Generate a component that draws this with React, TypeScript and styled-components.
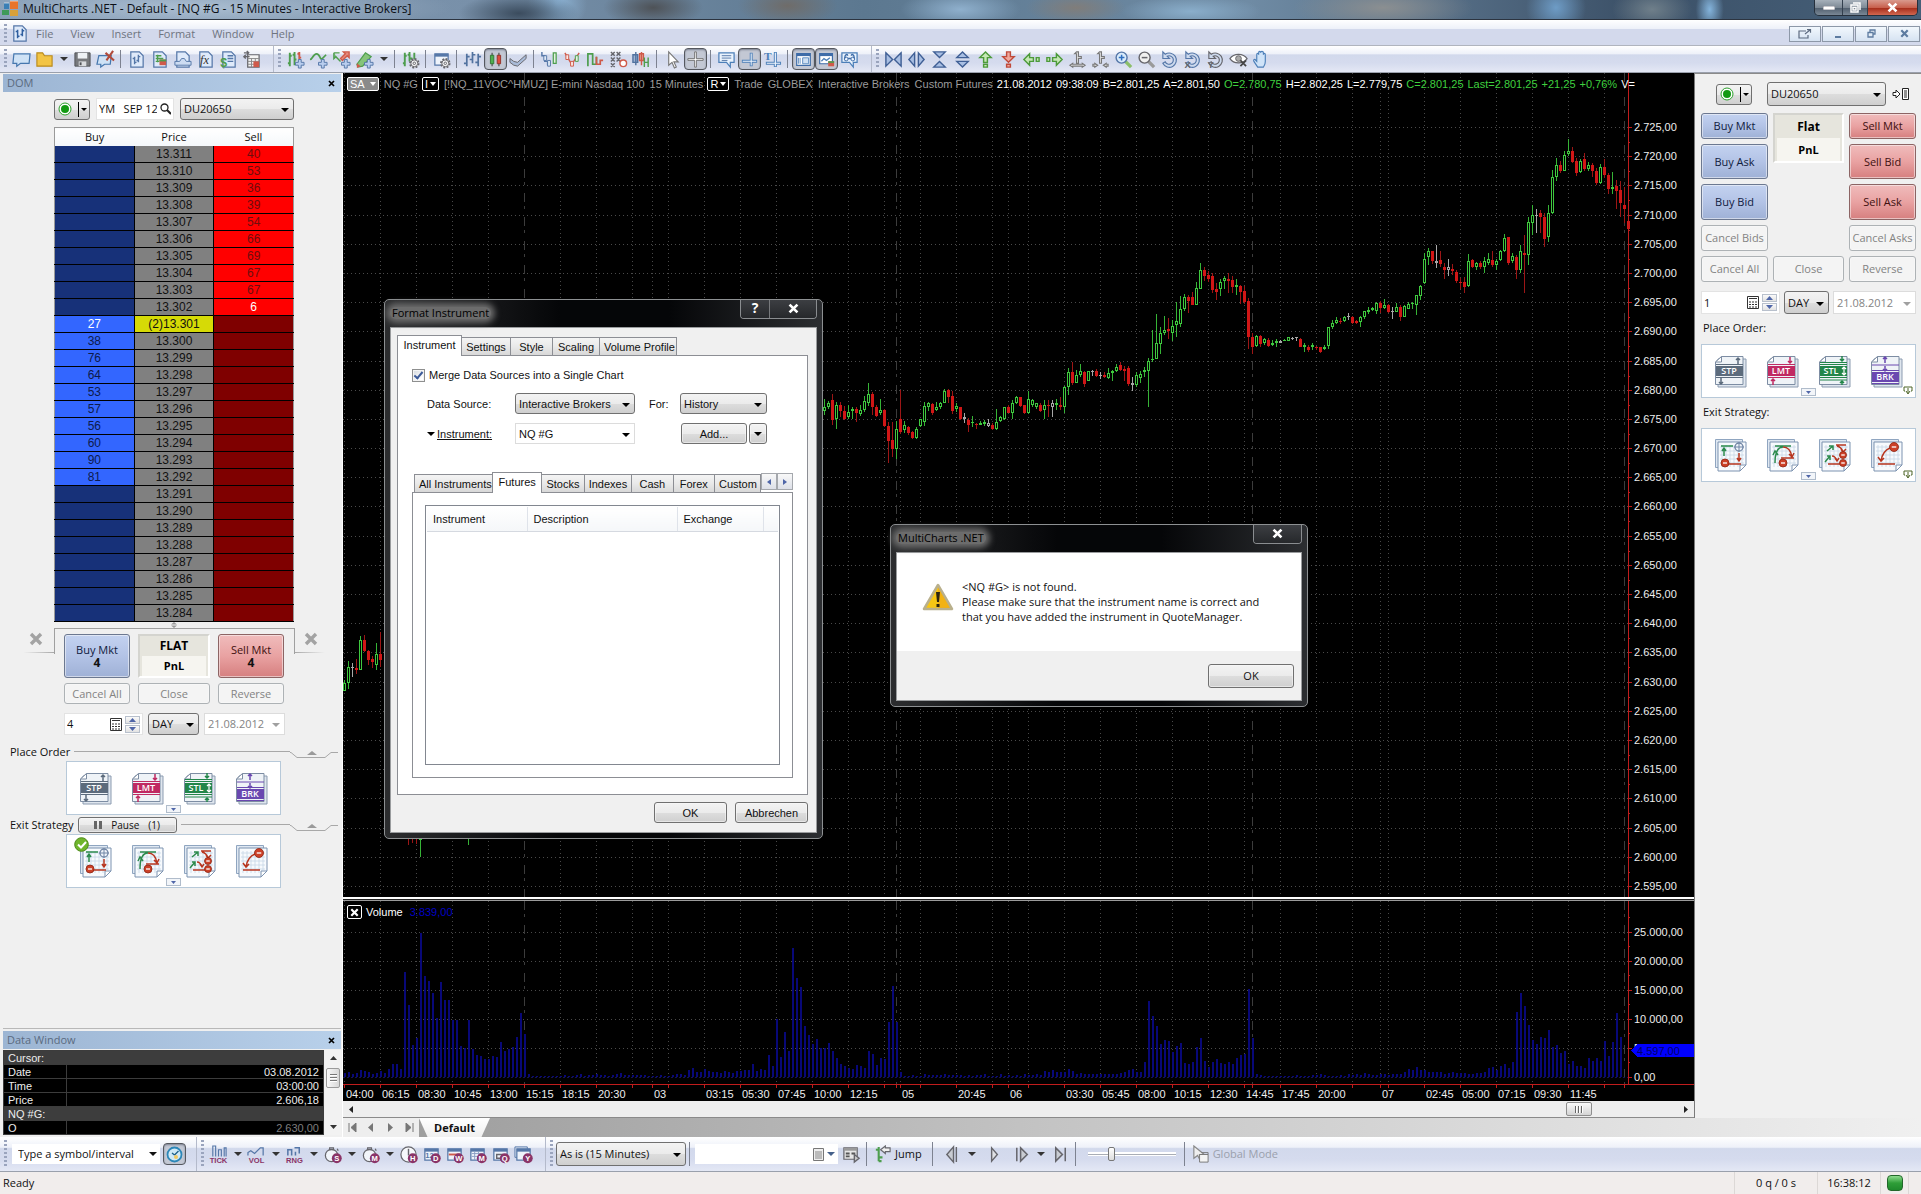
import React from "react";
import styled, { createGlobalStyle, css } from "styled-components";

const UI = `"Open Sans", "Noto Sans", sans-serif`;
const ARIAL = `"Liberation Sans", Arial, sans-serif`;

const Global = createGlobalStyle`
  *, *::before, *::after { box-sizing: border-box; }
  html, body { margin: 0; height: 100%; overflow: hidden; }
  body { font: 11px/14px ${UI}; color: #111; background: #f0f0f0; }
  button, input, select { font: inherit; color: inherit; margin: 0; }
  h1, h2, p { margin: 0; font-weight: 400; font-size: inherit; }
  table { border-collapse: collapse; }
  svg { display: block; }
`;

/* ---------- chart data ---------- */

type Candle = [string, number, number, number, number];
type Run = { x: number; bars: string };

/* each bar: colour, high, body top, body bottom, low, in thirds of a pixel */
const PRICE_RUNS: Run[] = [
  {
    x: 344,
    bars: `g1679,1688,1714,1714 g1623,1640,1688,1706 w1629,1642,1645,1670 r1618,1643,1649,1661 g1549,1559,1649,1649
    r1546,1559,1593,1596 r1590,1593,1621,1634 r1607,1618,1627,1643 g1568,1603,1634,1649 r1537,1603,1621,1640`,
  },
  { x: 408, bars: `r2140,2145,2150,2176 r2140,2145,2150,2170 r2130,2140,2150,2172 g2120,2130,2160,2212` },
  { x: 468, bars: `g2130,2140,2155,2174` },
  {
    x: 824,
    bars: `g838,860,872,886 g842,848,860,868 r822,840,900,916 g846,855,898,926 r846,856,872,890 r858,872,898,900
    g855,876,890,898 g862,868,874,898 r862,868,880,905 g855,870,882,888 g828,842,870,876 g790,822,850,858
    r815,822,860,886 r855,860,888,890 g838,870,880,886 r866,870,918,922 r905,918,962,1028 r905,960,986,1012
    g903,928,986,1018 r810,897,936,942 g903,916,930,938 r918,922,940,944 r932,936,954,956 g922,926,953,956
    g898,898,918,920 g846,858,905,918 g846,850,860,872 r848,852,880,886 g846,860,870,874 g846,850,860,866
    g806,814,848,850 r808,810,832,850 r814,828,872,882 g850,858,868,876 r860,862,898,900 w880,892,898,910
    r895,900,915,935 g888,905,908,920 r908,912,914,926 g902,908,914,916 g900,906,912,918 w898,910,918,922
    r910,916,928,930 g868,906,928,930 g888,890,904,906 g860,862,898,900 r854,860,878,880 g840,850,878,896
    g828,830,850,852 r830,832,858,860 r854,856,880,882 g812,838,880,882 g838,840,856,862 g848,850,862,866
    r850,854,872,876 g840,856,870,898 r840,855,857,890 w840,850,860,890 g838,850,855,870 r832,855,860,870
    g798,800,860,878 g745,757,800,825 r726,757,788,794 g750,765,788,790 g732,752,765,772 r754,756,793,802
    g752,754,782,784 w750,752,755,768 r746,754,768,770 w755,765,767,778 r756,764,772,774 g745,758,773,776
    g750,752,760,782 g732,740,754,756 r726,736,750,752 r738,748,752,782 r738,745,793,798 w770,790,795,812
    g757,766,795,802 g752,762,775,790 g742,750,756,772 g715,722,754,860 g630,716,719,726 g582,670,716,718
    g622,640,672,702 g588,630,640,645 r594,628,632,658 g600,618,638,662 g546,604,614,652 g528,566,612,622
    g522,530,566,572 r526,532,544,580 r516,532,554,556 g486,504,554,556 g430,450,506,508 r442,450,468,482
    r452,465,477,486 r460,467,510,518 r490,508,516,540 g478,486,508,528 g468,474,482,506 r460,476,482,520
    r468,480,500,520 g478,494,502,525 r495,497,516,552 r498,514,546,552 r535,544,650,688 r640,650,680,703
    g645,648,678,680 r645,648,672,680 g655,658,668,676 r655,660,678,680 g660,668,676,678 g656,662,668,682
    w660,662,668,670 g658,660,662,664 g650,652,662,664 w650,653,658,660 w650,652,655,664 r655,657,680,682
    g670,676,680,696 r675,680,690,696 g670,676,680,690 r678,680,682,690 r680,682,696,700 g675,680,688,690
    g620,622,678,686 g600,608,622,626 g592,600,610,612 r594,602,605,612 g588,590,604,606 w580,588,590,600
    r588,590,608,612 r600,602,610,612 g588,592,606,620 g572,574,590,596 g562,570,576,582 g562,564,570,574
    g546,548,572,582 r542,548,565,580 g538,555,563,568 r552,554,576,580 w562,572,575,597 g548,562,575,576
    r556,562,592,602 g555,557,590,592 g546,552,566,568 g546,548,553,568 g524,526,554,584 g495,497,527,540
    g398,418,490,492 g384,394,412,434 r392,394,422,432 w376,422,430,444 r394,420,433,442 r430,440,450,476
    w416,442,450,468 r432,448,453,466 r450,456,482,488 r474,486,490,506 r472,486,500,518 g402,422,498,500
    r418,420,440,444 g426,430,440,450 r422,430,442,448 g410,422,442,458 g400,418,428,434 r394,420,434,442
    g418,422,434,450 g390,394,420,422 g342,354,394,396 r350,352,428,434 g400,408,424,430 r405,410,450,476
    g376,394,450,458 r346,400,404,518 g290,306,404,434 g254,286,308,345 w268,285,288,338 r270,280,290,338
    r278,290,356,382 g256,280,352,366 g150,172,280,282 g114,136,172,184 r122,136,152,158 g94,104,152,154
    g58,94,102,108 r80,94,126,128 r114,124,158,168 g118,124,156,158 r98,118,148,154 g126,136,146,154
    r128,136,154,172 r145,154,190,194 g133,142,190,192 r118,142,166,174 r158,166,208,222 g156,200,208,222
    r180,198,214,266 r184,210,250,290 r200,256,266,310 r290,304,326,328`,
  },
];

const parseRun = ({ x, bars }: Run) =>
  bars
    .trim()
    .split(/\s+/)
    .map((b, i) => {
      const [h, t, m, l] = b.slice(1).split(",").map(Number);
      return { x: x + i * 4, bar: [b[0], h, t, m, l] as Candle };
    });

const CANDLES = PRICE_RUNS.flatMap(parseRun);
const INK: Record<string, string> = { g: "#3fc83f", r: "#d01616", w: "#a8a8a8" };
const WICK: Record<string, string> = { g: "#36b436", r: "#9c1616", w: "#a8a8a8" };

/* bar heights in thirds of a pixel, one bar every four pixels */
const VOLUME_X = 344;
const VOLUME = [
  12, 14, 8, 12, 20, 17, 14, 8, 12, 17, 12, 23, 38, 38, 23, 315, 216, 95, 116, 432, 302, 287, 251, 176, 285, 230, 230,
  172, 172, 92, 87, 170, 83, 65, 62, 54, 54, 62, 60, 106, 78, 84, 90, 120, 192, 130, 8, 4, 2, 3, 2, 3, 2, 2, 3, 5, 3, 4,
  5, 9, 4, 5, 6, 8, 7, 5, 4, 6, 10, 11, 6, 6, 5, 7, 5, 6, 4, 2, 2, 5, 2, 3, 6, 9, 9, 6, 20, 26, 14, 14, 24, 17, 14, 14,
  12, 17, 14, 12, 17, 17, 20, 20, 38, 17, 23, 20, 65, 32, 174, 60, 134, 78, 387, 297, 270, 154, 126, 100, 114, 88, 88,
  102, 78, 58, 40, 32, 28, 24, 35, 32, 26, 78, 68, 35, 58, 54, 164, 273, 164, 14, 4, 3, 5, 3, 2, 9, 7, 6, 5, 7, 9, 6, 5,
  6, 6, 4, 5, 4, 6, 5, 8, 4, 3, 3, 9, 3, 7, 4, 5, 4, 9, 6, 5, 8, 7, 17, 15, 20, 14, 14, 14, 23, 18, 10, 12, 10, 9, 10, 8,
  9, 8, 10, 9, 10, 12, 14, 20, 23, 14, 14, 44, 228, 183, 154, 98, 112, 108, 74, 92, 102, 42, 40, 44, 90, 116, 47, 30, 45,
  53, 42, 38, 45, 40, 56, 65, 68, 265, 116, 8, 5, 3, 4, 4, 3, 3, 3, 4, 3, 5, 3, 4, 3, 5, 6, 8, 5, 4, 3, 3, 5, 4, 9, 6, 8,
  7, 12, 8, 6, 7, 8, 10, 7, 8, 9, 10, 14, 23, 22, 29, 20, 20, 14, 14, 14, 14, 10, 12, 14, 12, 12, 11, 10, 10, 12, 12, 14, 26,
  29, 20, 32, 38, 26, 44, 195, 252, 212, 157, 110, 98, 120, 118, 140, 90, 95, 72, 78, 40, 47, 32, 32, 28, 56, 48, 56, 47,
  108, 62, 104, 192, 120,
];

const GRID_X = [344, 380, 416, 452, 488, 560, 596, 632, 652, 668, 704, 740, 776, 812, 848, 884, 900, 920, 956, 992, 1008,
  1028, 1064, 1100, 1136, 1172, 1208, 1244, 1280, 1316, 1352, 1380, 1388, 1424, 1460, 1496, 1532, 1568, 1604];
const SESSION_X = [524, 896, 1252, 1624];

const TIMES: [number, string][] = [
  [344, "04:00"], [380, "06:15"], [416, "08:30"], [452, "10:45"], [488, "13:00"], [524, "15:15"], [560, "18:15"],
  [596, "20:30"], [652, "03"], [704, "03:15"], [740, "05:30"], [776, "07:45"], [812, "10:00"], [848, "12:15"], [900, "05"],
  [956, "20:45"], [1008, "06"], [1064, "03:30"], [1100, "05:45"], [1136, "08:00"], [1172, "10:15"], [1208, "12:30"],
  [1244, "14:45"], [1280, "17:45"], [1316, "20:00"], [1380, "07"], [1424, "02:45"], [1460, "05:00"], [1496, "07:15"],
  [1532, "09:30"], [1568, "11:45"],
];

const AXIS_X = 1628;
const PRICES = Array.from({ length: 27 }, (_, i) => ({
  y: Math.round(127 + i * 29.19),
  label: `2.${725 - i * 5},00`,
}));
const VOLS = ["25.000,00", "20.000,00", "15.000,00", "10.000,00", "5.000,00", "0,00"].map((label, i) => ({
  y: Math.round(932 + i * 28.9),
  label,
}));

/* ---------- shared controls ---------- */

const glass = "linear-gradient(#f3f3f3, #ebebeb 50%, #dddddd 51%, #cfcfcf)";

const Button = styled.button<{ $tone?: "buy" | "sell"; $w?: number; $h?: number; $font?: string }>`
  display: flex;
  flex-direction: column;
  align-items: center;
  justify-content: center;
  width: ${(p) => (p.$w ? `${p.$w}px` : "100%")};
  height: ${(p) => p.$h ?? 21}px;
  padding: 0;
  border: 1px solid #707070;
  border-radius: 3px;
  background: ${glass};
  box-shadow: inset 0 0 0 1px #fafafa88;
  white-space: nowrap;
  ${(p) => p.$font && `font-family: ${p.$font};`}
  ${(p) => p.$tone === "buy" && css`background: linear-gradient(#c3d2f0, #b3c3e6 50%, #9fb1d6); border-color: #6c7890; color: #102040;`}
  ${(p) => p.$tone === "sell" && css`background: linear-gradient(#f0bcbc, #e9a2a2 50%, #d67f7f); border-color: #8c6464; color: #401010;`}
  &:disabled { background: #f4f4f4; border-color: #adb2b5; color: #838383; }
  b { font-size: 12px; line-height: 12px; color: #111; }
`;

const SelectBox = styled.span<{ $w?: number; $h?: number; $plain?: boolean; $font?: string }>`
  position: relative;
  display: block;
  flex: ${(p) => (p.$w ? "none" : 1)};
  ${(p) => p.$w && `width: ${p.$w}px;`}
  select, input {
    display: block;
    width: 100%;
    height: ${(p) => p.$h ?? 22}px;
    padding: 0 16px 0 3px;
    appearance: none;
    outline: 0;
    font-family: ${(p) => p.$font ?? UI};
    border: 1px solid ${(p) => (p.$plain ? "#dcdcdc" : "#707070")};
    border-radius: ${(p) => (p.$plain ? 0 : 3)}px;
    background: ${(p) => (p.$plain ? "#fff" : glass)};
  }
  select:disabled, input:disabled { color: #838383; opacity: 1; }
  &::after {
    content: "";
    position: absolute;
    right: 5px;
    top: calc(50% - 1px);
    border: 4px solid transparent;
    border-top: 4px solid #000;
    border-bottom: 0;
    pointer-events: none;
  }
  &:has(:disabled)::after { border-top-color: #a0a0a0; }
`;

const Select = ({ value, label, ...rest }: { value: string; label: string; disabled?: boolean; $w?: number; $h?: number; $plain?: boolean; $font?: string }) => {
  const { disabled, ...box } = rest;
  return (
    <SelectBox {...box}>
      <select aria-label={label} disabled={disabled} defaultValue={value}>
        <option>{value}</option>
      </select>
    </SelectBox>
  );
};

const Caret = styled.span<{ $c?: string }>`
  display: inline-block;
  flex: none;
  border: 4px solid transparent;
  border-top: 4px solid ${(p) => p.$c ?? "#111"};
  border-bottom: 0;
`;

/* ---------- toolbar icons (20 x 20) ---------- */

const B = "#5577a8";
const G = "#4e9e4e";
const R = "#cf5a4a";
const K = "#66666c";
const P = "#8a3468";

const S = (d: string, c = B, f = "none", w = 1.5) => <path d={d} stroke={c} fill={f} strokeWidth={w} />;
const Plus = () => <path d="M13 10h3v3h3v3h-3v3h-3v-3h-3v-3h3z" fill="#b9cdee" stroke={B} />;
const Gear = () => (
  <>
    <circle cx="14" cy="14" r="4.500" fill="#eee" stroke={K} strokeWidth="2" strokeDasharray="2 1.500" />
    <circle cx="14" cy="14" r="3.600" fill="#f4f4f4" stroke={K} />
    <circle cx="14" cy="14" r="1.300" fill="none" stroke={K} />
  </>
);
const Page = ({ c = "#dfeafa" }: { c?: string }) => <path d="M4 2h9l4 4v12H4z" fill={c} stroke={B} strokeWidth="1.300" />;
const Bubble = () => <path d="M2 3h16v10h-4v5l-4-5H2z" fill="#eaf3fd" stroke="#4c7fb8" strokeWidth="1.300" />;
const Win = () => (
  <>
    <path d="M3 4h14v12H3z" fill="#eef3fb" stroke={B} strokeWidth="1.300" />
    <path d="M3 4h14v3H3z" fill={B} />
  </>
);
const Badge = ({ t }: { t: string }) => (
  <>
    <circle cx="14.500" cy="14" r="5.200" fill={P} />
    <text x="14.500" y="17" textAnchor="middle" fontSize="8" fontWeight="700" fill="#fff" fontFamily={ARIAL}>{t}</text>
  </>
);
const Watch = () => (
  <>
    <circle cx="9" cy="11" r="6.500" fill="#f2f5fa" stroke={K} strokeWidth="1.300" />
    <path d="M7 3h4v2H7zM15 4l1 2" fill="none" stroke={K} strokeWidth="1.300" />
  </>
);
const Tag = ({ t }: { t: string }) => (
  <text x="10" y="19" textAnchor="middle" fontSize="8" fontWeight="700" fill={P} fontFamily={ARIAL}>{t}</text>
);
const Mag = ({ plus }: { plus?: boolean }) => (
  <>
    <path d="M12 12l6 6" stroke={plus ? "#8cbf6a" : "#9a9a9a"} strokeWidth="3.500" />
    <circle cx="8" cy="8" r="5.800" fill={plus ? "#d9ebfb" : "#f0f0f0"} stroke={plus ? B : K} strokeWidth="1.500" />
    <path d={plus ? "M5 8h6M8 5v6" : "M5 8h6"} stroke={plus ? "#2f6fc0" : K} strokeWidth="1.600" />
  </>
);
const Undo = ({ c = B }: { c?: string }) => (
  <path d="M3 2v7h7L7.500 6.500a4.500 4.500 0 1 1-2 6L3 14A7.500 7.500 0 1 0 5.500 4.500z" fill="#cddaee" stroke={c} strokeWidth="1.200" />
);

const ICONS: Record<string, React.ReactNode> = {
  fresh: <path d="M2 4h17l-1 10H9l-4 3v-3H1z" fill="#cfe2f6" stroke="#4677ae" strokeWidth="1.300" />,
  folder: <path d="M2 3h6l2 3h8v11H2z" fill="#f2c445" stroke="#b98a1e" strokeWidth="1.200" />,
  save: <><path d="M2 3h16v14H2z" fill="#77797d" stroke="#505257" /><path d="M5 3h10v6H5z" fill="#eef1f5" /><path d="M6 12h8v5H6z" fill="#dadcdf" /><path d="M7 13h2v3H7z" fill="#505257" /></>,
  shut: <><path d="M3 6h13l-1 9H9l-4 3v-3H1z" fill="#cfe2f6" stroke="#4677ae" strokeWidth="1.300" />{S("M10 3l9 8M18 1l-7 10", "#b04a3c", "none", 2.2)}</>,
  pageBars: <><Page />{S("M8 7v8M6 9h2M8 13h2M12 5v8M12 7h2M10 11h2")}</>,
  pageGrid: <><Page />{S("M6 6h6M6 9h8M6 12h4M8 5v8", G)}<path d="M10 10h7v6h-7z" fill={R} /><path d="M10 10h7v2h-7z" fill={G} /></>,
  pageScan: <><Page /><path d="M2 12h5l2-3h3l2 3h5v4H2z" fill="#cddcf2" stroke={B} /></>,
  pageFx: <><Page /><text x="9" y="15" fontSize="13" fontStyle="italic" textAnchor="middle" fill="#333" fontFamily="Liberation Serif, serif">fx</text></>,
  pageMoney: <><Page />{S("M9 6h6M9 9h6M9 12h6")}<text x="5" y="18" fontSize="13" fontWeight="700" textAnchor="middle" fill={G} fontFamily={ARIAL}>$</text></>,
  pageTable: <><path d="M6 5h12v13H6z" fill="#f4f4f4" stroke={K} strokeWidth="1.300" />{S("M6 9h12M6 12h12M6 15h12M10 9v9M14 9v9", "#888", "none", 1)}<path d="M12 12h6v6h-6z" fill={R} />{S("M2 3h5M5 1l2 2-2 2M8 7H3M4 5L2 7l2 2", K)}</>,
  addBars: <>{S("M4 3v14M2 14h2M4 6h2M9 2v14M7 5h2M9 10h2", G, "none", 2)}{S("M14 2v8M12 4h2M14 8h2", R, "none", 2)}<Plus /></>,
  addWave: <>{S("M1 10c3 0 3-6 7-6s3 7 6 5l4-4", G, "none", 1.800)}<Plus /></>,
  addSignal: <>{S("M2 3v6l2-2 5 5M2 3h6", G, "#8fc98f")}{S("M18 2h-6l2 2-5 5 2 2 5-5 2 2z", R, "#e58a7c")}<Plus /></>,
  addDraw: <><path d="M2 15l9-12 6 4-9 10-5 1z" fill="#86c47a" stroke={G} strokeWidth="1.300" /><path d="M2 14l4 3-4 2z" fill={R} /><Plus /></>,
  gearBars: <>{S("M4 3v14M2 14h2M4 6h2M9 2v10M7 5h2M9 9h3M14 3v7", G, "none", 2)}<Gear /></>,
  gearWin: <><Win /><Gear /></>,
  ohlc: S("M4 4v13M1 14h3M4 7h3M10 2v12M7 10h3M10 5h3M16 4v13M13 13h3M16 7h3", "#51729f", "none", 1.8),
  candles: <>{S("M6 2v16M14 2v16", "#555")}<path d="M4 5h4v10H4z" fill="#4fb04f" stroke="#2c702c" /><path d="M12 5h4v10h-4z" fill="#e04b3c" stroke="#8d2a20" /></>,
  line: <path d="M1 9l4 3 4 1 9-8v4l-9 8-4-1-4-3z" fill="#a9bbd8" stroke={K} />,
  tickA: <>{S("M2 2v4h3v6h3v4", B)}<path d="M4 6h3v5H4zM8 11h3v6H8z" fill="#dfe9f7" stroke={B} /><path d="M14 3h3v11h-3z" fill="#e4f2e0" stroke={G} strokeWidth="1.300" /></>,
  tickB: <>{S("M2 3l3 5 4 7 3-4 5-8", R)}<path d="M3 5h3v5H3zM8 12h3v5H8z" fill="#fbe9e6" stroke={R} /><path d="M13 6h3v6h-3z" fill="#e4f2e0" stroke={G} /></>,
  tickC: <>{S("M2 17V4h5v11h4V7", G, "none", 1.8)}{S("M11 7v8h4v-4h3", R, "none", 1.8)}</>,
  pnf: <>{S("M2 2l4 4M6 2L2 6M2 8l4 4M6 8l-4 4M2 14l4 4M6 14l-4 4M8 2l4 4M12 2L8 6M8 8l4 4M12 8l-4 4", K)}<circle cx="15" cy="14" r="3.500" fill="#fff" stroke={R} strokeWidth="1.500" /></>,
  multi: <>{S("M4 2v14M1 5h5v8H1z", "#51729f", "#9db3d4")}{S("M10 2v14M8 4h4v7H8z", R, "#f0c8c0")}{S("M13 8v10M17 8v10M13 13h4", G)}</>,
  arrow: <path d="M6 2v14l3.500-3 2.500 6 2-1-2.500-5.500H16z" fill="#fff" stroke="#777" strokeWidth="1.200" />,
  cross: <path d="M9 1h2v8h8v2h-8v8H9v-8H1V9h8z" fill="#fff" stroke="#666" strokeWidth="1" />,
  note: <><Bubble />{S("M5 6h10M5 8.500h10M5 11h6", B, "none", 1)}</>,
  level: <>{S("M12 2v16M1 12h18", "#4c7fb8", "none", 3.4)}{S("M12 3v14M2 12h16", "#eef5fd", "none", 1.2)}</>,
  textMark: <><text x="5" y="11" fontSize="12" fontWeight="700" textAnchor="middle" fill="#4c7fb8" fontFamily="Liberation Serif, serif">T</text>{S("M13 2v16M3 14h16", "#4c7fb8", "none", 3.2)}{S("M13 3v14M4 14h14", "#eef5fd", "none", 1.2)}</>,
  panel: <><path d="M2 3h16v14H2z" fill="#fff" stroke="#3e6ca8" strokeWidth="1.400" /><path d="M2 3h16v3H2z" fill="#3e6ca8" />{S("M4 8v7M6 8v7", "#4c7fb8", "none", 1)}<path d="M9 8h7v7H9z" fill="#cfe0f3" stroke="#4c7fb8" /></>,
  chartWin: <><path d="M2 3h15v12H2z" fill="#fff" stroke="#3e6ca8" strokeWidth="1.400" /><path d="M2 3h15v3H2z" fill="#3e6ca8" />{S("M4 12l3-3 3 2 4-3", "#4c7fb8")}<path d="M12 12h7v6h-7z" fill={R} /><path d="M12 12h7v2h-7z" fill={G} /></>,
  glasses: <><Bubble />{S("M5 9c0-5 3-5 3-3M15 9c0-5-3-5-3-3M8.500 9h3", "#3e6ca8")}<circle cx="6.500" cy="9.500" r="2" fill="none" stroke="#3e6ca8" /><circle cx="13.500" cy="9.500" r="2" fill="none" stroke="#3e6ca8" /></>,
  squeezeX: S("M2 3l7 7-7 7zM18 3l-7 7 7 7z", "#3f5f95", "#a9bfe3"),
  stretchX: S("M8 3l-6 7 6 7zM12 3l6 7-6 7z", "#3f5f95", "#a9bfe3"),
  squeezeY: S("M4 2h12l-6 6zM4 18h12l-6-6z", "#3f5f95", "#a9bfe3"),
  stretchY: S("M4 8h12l-6-6zM4 12h12l-6 6z", "#3f5f95", "#a9bfe3"),
  up: S("M10 2l6 6h-4v5H8V8H4zM8 15h4v3H8z", "#4c9a3a", "#c6e8b6"),
  down: S("M8 2h4v5h4l-6 6-6-6h4zM8 15h4v3H8z", "#c04a3a", "#f0a89c"),
  left: S("M8 4v4h4v4H8v4l-6-6zM15 8h3v4h-3z", "#4c9a3a", "#c6e8b6"),
  right: S("M12 4v4H8v4h4v4l6-6zM2 8h3v4H2z", "#4c9a3a", "#c6e8b6"),
  padWide: S("M9 2h2v5h3v2h-3v5H9V4H7zM2 16l3-2v1h10v-1l3 2-3 2v-1H5v1z", "#777", "#eee", 1.2),
  padThin: S("M9 2h2v5h3v2h-3v5H9V4H7zM7 16l-3-2v1H2v2h2v1zM13 16l3-2v1h2v2h-2v1z", "#777", "#eee", 1.2),
  zoomIn: <Mag plus />,
  zoomOut: <Mag />,
  undo: <Undo />,
  undoX: <><Undo /><text x="5" y="19" fontSize="10" fontWeight="700" textAnchor="middle" fill={K} fontFamily={ARIAL}>X</text></>,
  undoY: <><Undo c={K} /><text x="5" y="19" fontSize="10" fontWeight="700" textAnchor="middle" fill={K} fontFamily={ARIAL}>Y</text></>,
  eye: <><path d="M1 9c4-6 14-6 18 0-4 6-14 6-18 0z" fill="#fff" stroke={K} strokeWidth="1.300" /><circle cx="10" cy="9" r="3" fill="#aaa" stroke={K} />{S("M12 11l6 6M18 11l-6 6", "#444", "none", 1.8)}</>,
  hand: <path d="M6 18l-4-6c-1-2 1-3 2-1l1 1V5c0-2 2-2 2 0V3c0-2 2-2 2 0v0c0-2 3-2 3 0v2c0-2 2-2 2 0v7c0 3-1 4-2 6z" fill="#cfe3f8" stroke="#4c7fb8" strokeWidth="1.200" />,
  chart: <><Page />{S("M8 6v9M6 8h2M8 13h2M13 5v8M11 11h2M13 7h2", "#2f5fa0", "none", 1.6)}</>,
  tick: <>{S("M4 12V1h3v11M10 12V5h3v7M16 12V3h2v9", B, "none", 1.2)}<Tag t="TICK" /></>,
  vol: <>{S("M1 11V8l3-2 4 3 6-6h3v8", B, "none", 1.3)}<Tag t="VOL" /></>,
  rng: <>{S("M3 11V5h4v6M11 11V7M10 3h5v6", B, "none", 1.6)}<Tag t="RNG" /></>,
  watchS: <><Watch /><Badge t="S" /></>,
  watchM: <><Watch /><Badge t="M" /></>,
  clockH: <><circle cx="10" cy="10" r="8" fill="#f6f8fb" stroke={K} strokeWidth="1.300" />{S("M10 4v7", K)}<Badge t="H" /></>,
  calD: <><Win /><text x="8" y="14" fontSize="8" fontWeight="700" textAnchor="middle" fill={B} fontFamily={ARIAL}>12</text><Badge t="D" /></>,
  calW: <><Win /><path d="M4 9h12v2H4z" fill={R} /><Badge t="W" /></>,
  calM: <><Win />{S("M4 9h12M4 12h12M7 7v9M11 7v9", "#8a9fc4", "none", 1)}<Badge t="M" /></>,
  calQ: <><Win />{S("M6 10h6v4H6z", K)}<Badge t="Q" /></>,
  calY: <><path d="M1 2h13v11H1z" fill="#dfe7f4" stroke={B} /><Win /><Badge t="Y" /></>,
  gridGo: <><path d="M2 3h14v12H2z" fill="#e6e6e6" stroke={K} strokeWidth="1.300" /><path d="M2 3h14v3H2z" fill="#9a9a9a" />{S("M4 9h4M4 12h4M10 9h4", "#555", "none", 2)}{S("M13 10l5 4-5 4z", K, "#ccc")}</>,
  jump: <>{S("M6 2v15M3 5h3M6 13h4M6 17h3", G, "#9ccf8a", 2.2)}{S("M13 1L8 5l5 4V7h5V3h-5z", K, "#eee", 1.2)}</>,
  backEnd: S("M10 2v16l-7-8zM13 2v16", K, "#c9ccd2"),
  play: S("M7 3l6 7-6 7z", K, "#e0e2e6"),
  playBar: S("M4 3v14M8 3l7 7-7 7z", K, "#c9ccd2", 1.6),
  playEnd: S("M5 3l7 7-7 7zM15 3v14", K, "#c9ccd2", 1.6),
  global: <><path d="M3 1v13l4-3 2 4 2-1-2-4h5z" fill="#eee" stroke="#888" strokeWidth="1.200" /><path d="M9 10h9v8H9z" fill="#f4f4f4" stroke="#777" /><path d="M11 8h7v2" fill="none" stroke="#777" /></>,
};

/* ---------- toolbars ---------- */

const barFill = "linear-gradient(#ffffff, #eef1f9 30%, #d2d9ec 34%, #d5dbee 65%, #e4e8f5)";

const Bar = styled.div<{ $h: number }>`
  display: flex;
  align-items: center;
  height: ${(p) => p.$h}px;
  flex: none;
  background: ${barFill};
  border-bottom: 1px solid #9aa0ac;
`;
const Group = styled.div`
  display: flex;
  align-items: center;
  height: 100%;
  padding-right: 10px;
  border-right: 1px solid #b4bacb;
  &:last-child { border: 0; }
`;
const Grip = styled.span`
  flex: none;
  width: 3px;
  height: 80%;
  margin: 0 3px 0 4px;
  background: repeating-linear-gradient(#9aa4bd 0 2px, transparent 2px 4px);
`;
const Tool = styled.button<{ $on?: boolean }>`
  display: flex;
  align-items: center;
  justify-content: center;
  flex: none;
  width: 23px;
  height: 22px;
  padding: 0;
  border: 1px solid transparent;
  border-radius: 4px;
  background: none;
  ${(p) => p.$on && "border-color: #55585f; background: #c3c8d4; box-shadow: inset 0 1px 2px #7c8190;"}
`;
const Arrow = styled.button`
  display: flex;
  align-items: center;
  justify-content: center;
  flex: none;
  width: 15px;
  height: 22px;
  padding: 0;
  border: 0;
  background: none;
`;
const Sep = styled.span`
  flex: none;
  width: 1px;
  height: 70%;
  margin: 0 4px 0 3px;
  background: #7d8290;
`;

const Glyph = ({ name, size = 19 }: { name: string; size?: number }) => (
  <svg width={size} height={size} viewBox="0 0 20 20" aria-hidden>{ICONS[name]}</svg>
);

/* "v" is a drop-down arrow, "|" a separator, a leading "*" a pressed button */
const Tools = ({ items }: { items: string }) => (
  <>
    {items.split(" ").map((t, i) =>
      t === "|" ? <Sep key={i} /> :
      t === "v" ? <Arrow key={i} aria-label="More"><Caret $c="#333" /></Arrow> :
      <Tool key={i} $on={t[0] === "*"} aria-label={t.replace("*", "")}><Glyph name={t.replace("*", "")} size={t[0] === "*" ? 17 : 19} /></Tool>
    )}
  </>
);

/* ---------- frame ---------- */

const Shell = styled.div`
  display: flex;
  flex-direction: column;
  height: 100vh;
  overflow: hidden;
`;

const TitleBar = styled.header`
  display: flex;
  align-items: flex-start;
  flex: none;
  height: 20px;
  padding-left: 2px;
  border-bottom: 1px solid #2c3440;
  background:
    radial-gradient(ellipse 260px 26px at 10% 40%, #b6c8dacc, transparent),
    radial-gradient(ellipse 60px 20px at 27% 70%, #3b4c5e, transparent),
    radial-gradient(ellipse 30px 30px at 29% 20%, #8db4d6, transparent),
    radial-gradient(ellipse 50px 20px at 34% 40%, #4e5257, transparent),
    radial-gradient(ellipse 50px 20px at 41% 30%, #6f6c69, transparent),
    radial-gradient(ellipse 60px 20px at 50% 50%, #8fb0cd, transparent),
    radial-gradient(ellipse 50px 16px at 56% 40%, #807d7a, transparent),
    radial-gradient(ellipse 70px 16px at 62% 60%, #8aaecb, transparent),
    radial-gradient(ellipse 90px 24px at 72% 40%, #8b8f91, transparent),
    radial-gradient(ellipse 30px 30px at 81% 40%, #6e9cc6, transparent),
    radial-gradient(ellipse 40px 24px at 86% 50%, #6f7f8a, transparent),
    radial-gradient(ellipse 14px 24px at 89% 50%, #84b4dc, transparent),
    linear-gradient(90deg, #8199b2, #7890a9 25%, #5c7890 45%, #6f8ba4 65%, #3c5168 85%, #466079);
  h1 { flex: 1; padding-left: 4px; font-size: 12px; line-height: 17px; color: #0c1016; }
`;
const Logo = () => (
  <svg width="17" height="17" viewBox="0 0 17 17" aria-hidden>
    <path d="M8 1h8v8H8z" fill="#e8742a" /><path d="M2 3h5v6H2z" fill="#3a7fb5" />
    <path d="M0 10h7v5H0z" fill="#3f9a5a" /><path d="M8 10h8v6H8z" fill="#d8a13a" /><path d="M2 3h5M8 1h8" stroke="#fff" strokeOpacity=".6" />
  </svg>
);
const CapGroup = styled.div`
  display: flex;
  margin-right: 3px;
  border: 1px solid #26303c;
  border-top: 0;
  border-radius: 0 0 5px 5px;
  overflow: hidden;
  button {
    display: flex;
    align-items: center;
    justify-content: center;
    width: 28px;
    height: 15px;
    padding: 0;
    border: 0;
    border-right: 1px solid #33404e;
    background: linear-gradient(#a6b0ba, #7e8a96 50%, #4f5d6c 51%, #7a8896);
  }
  button:nth-child(2) { width: 25px; }
  button:last-child { width: 49px; border: 0; background: linear-gradient(#d99a8e, #c8614e 50%, #a32a18 51%, #d2674f); }
`;
const MenuBar = styled.nav`
  display: flex;
  align-items: center;
  flex: none;
  height: 26px;
  padding: 2px 1px 0 0;
  border-bottom: 1px solid #b0b4be;
  background: linear-gradient(#ffffff, #eef1f9 34%, #d3d9ec 36%);
`;
const MenuItem = styled.button`
  padding: 0;
  margin-left: 17px;
  border: 0;
  background: none;
  font-size: 11px;
  color: #6e7480;
  &:first-of-type { margin-left: 7px; }
`;
const MdiButtons = styled.div`
  display: flex;
  gap: 1px;
  margin-left: auto;
  button {
    display: flex;
    align-items: center;
    justify-content: center;
    width: 32px;
    height: 16px;
    padding: 0;
    border: 1px solid #8d98a8;
    background: linear-gradient(#f2f8fd, #d6e3f2);
  }
`;

const Workspace = styled.main`
  display: grid;
  grid-template-columns: 343px minmax(0, 1fr);
  flex: 1;
  min-height: 0;
`;

/* ---------- left dock ---------- */

const Dock = styled.aside`
  display: flex;
  flex-direction: column;
  min-height: 0;
  padding: 1px 1px 2px 3px;
  border-right: 1px solid #fff;
  background: #f0f0f0;
`;
const DockTitle = styled.header`
  display: flex;
  align-items: center;
  flex: none;
  height: 18px;
  padding: 0 6px 0 4px;
  background: linear-gradient(90deg, #9cb5d3, #b8d0ea);
  color: #5b6b80;
  h2 { flex: 1; font-size: 11px; }
  button { padding: 0; border: 0; background: none; }
`;
const CloseX = ({ c = "#000", s = 7 }: { c?: string; s?: number }) => (
  <svg width={s} height={s} viewBox="0 0 7 7" aria-hidden><path d="M1 1l5 5M6 1L1 6" stroke={c} strokeWidth="1.700" /></svg>
);

const Ladder = styled.section`
  width: 240px;
  margin: 6px auto 0 51px;
`;
const ConnRow = styled.div`
  display: flex;
  align-items: center;
  gap: 6px;
  height: 22px;
  margin-bottom: 7px;
`;
const Conn = styled.button`
  display: flex;
  align-items: center;
  justify-content: space-between;
  width: 36px;
  height: 21px;
  padding: 0 1px 0 3px;
  border: 1px solid #707070;
  border-radius: 3px;
  background: ${glass};
`;
const ConnButton = () => (
  <Conn aria-label="Connection">
    <svg width="14" height="14" viewBox="0 0 14 14" aria-hidden>
      <circle cx="7" cy="7" r="6" fill="#fff" stroke="#2ca02c" /><circle cx="7" cy="7" r="4" fill="#129a12" />
    </svg>
    <svg width="11" height="15" viewBox="0 0 11 15" aria-hidden><path d="M1.500 0v15" stroke="#000" /><path d="M4 6h6l-3 3z" /></svg>
  </Conn>
);
const Field = styled.label<{ $w?: number; $h?: number }>`
  display: flex;
  align-items: center;
  gap: 3px;
  flex: none;
  width: ${(p) => p.$w}px;
  height: ${(p) => p.$h ?? 22}px;
  padding: 0 2px;
  background: #fff;
  border: 1px solid #e3e3e3;
  input { flex: 1; min-width: 0; padding: 0; border: 0; outline: 0; background: none; }
`;
const DomTable = styled.table`
  width: 240px;
  table-layout: fixed;
  border: 1px solid #9a9a9a;
  border-bottom-color: #000;
  font-family: ${ARIAL};
  font-size: 12px;
  th {
    height: 18px;
    padding: 0;
    font: 11px/14px ${UI};
    background: linear-gradient(#fff, #f4f7fa);
  }
  td { height: 17px; padding: 0; line-height: 14px; text-align: center; border: 1px solid #000; }
  td:first-child { border-left: 0; }
  td:last-child { border-right: 0; }
  tr:first-child td { border-top: 0; }
`;
const BuyCell = styled.td<{ $has: boolean; $hot: boolean }>`
  background: ${(p) => (p.$has ? "#3366ff" : "#173179")};
  color: ${(p) => (p.$hot ? "#fff" : "#0d1a4c")};
`;
const PriceCell = styled.td<{ $hot: boolean }>`
  background: ${(p) => (p.$hot ? "#d6da06" : "#808080")};
  color: #111;
`;
const SellCell = styled.td<{ $has: boolean; $hot: boolean }>`
  background: ${(p) => (p.$has ? "#ff0000" : "#7f0000")};
  color: ${(p) => (p.$hot ? "#fff" : "#6e0d0d")};
`;

const SELLS = [40, 53, 36, 39, 54, 66, 69, 67, 67, 6];
const BUYS = [27, 38, 76, 64, 53, 57, 56, 60, 90, 81];

const Split = styled.div`
  display: flex;
  justify-content: center;
  height: 6px;
`;
const TradeWrap = styled.section`
  display: grid;
  grid-template-columns: 51px 241px 50px;
`;
const Ear = styled.div<{ $right?: boolean }>`
  display: flex;
  align-items: center;
  justify-content: center;
  height: 25px;
  padding: ${(p) => (p.$right ? "0 18px 4px 0" : "0 0 4px 15px")};
  background: linear-gradient(${(p) => (p.$right ? 270 : 90)}deg, transparent 40%, #a8a8a8) bottom / 100% 1px no-repeat;
  button { padding: 0; border: 0; background: none; }
`;
const Trade = styled.div`
  display: grid;
  grid-template-columns: 66px 72px 66px;
  gap: 5px 8px;
  padding: 5px 10px 0;
  border-top: 1px solid #a0a0a0;
  background: linear-gradient(#a0a0a0, #a0a0a0) 0 0 / 1px 25px no-repeat, linear-gradient(#a0a0a0, #a0a0a0) 100% 0 / 1px 25px no-repeat;
`;
const Pos = styled.div<{ $h: number }>`
  display: flex;
  flex-direction: column;
  height: ${(p) => p.$h}px;
  border: 2px solid #d4d4cf;
  border-right-color: #fff;
  border-bottom-color: #fff;
  background: #e6e5dd;
  text-align: center;
  font-weight: 700;
  font-size: 12px;
  color: #000;
  span { flex: 1; display: flex; align-items: center; justify-content: center; }
  span + span { margin: 0 2px; background: #f6f5f0; font-size: 11px; }
`;
const OrderRow = styled.div<{ $gap: number }>`
  display: flex;
  gap: ${(p) => p.$gap}px;
`;
const DomRow = styled(OrderRow)`
  width: 221px;
  margin: 9px 0 7px 61px;
`;
const Spin = styled.span`
  display: flex;
  flex-direction: column;
  gap: 1px;
  button {
    display: flex;
    align-items: center;
    justify-content: center;
    width: 15px;
    height: 8px;
    padding: 0;
    border: 1px solid #b8c0cc;
    background: linear-gradient(#fafafa, #e2e2e2);
  }
`;
const QtyField = ({ id, value, w, h }: { id: string; value: string; w: number; h: number }) => (
  <Field htmlFor={id} $w={w} $h={h}>
    <input id={id} aria-label="Quantity" defaultValue={value} />
    <svg width="12" height="13" viewBox="0 0 12 13" aria-hidden>
      <path d="M.5.500h11v12H.5z" fill="#fff" stroke="#333" /><path d="M2 2.500h8M2 6h2M5 6h2M8 6h2M2 8.500h2M5 8.500h2M8 8.500h2M2 11h2M5 11h2M8 11h2" stroke="#333" strokeWidth="1.200" />
    </svg>
    <Spin>
      <button aria-label="Increase"><svg width="7" height="4"><path d="M0 4l3.500-4L7 4z" fill="#4f66a8" /></svg></button>
      <button aria-label="Decrease"><svg width="7" height="4"><path d="M0 0l3.500 4L7 0z" fill="#4f66a8" /></svg></button>
    </Spin>
  </Field>
);

const Fold = styled.div`
  display: flex;
  align-items: center;
  height: 19px;
  padding: 0 3px 0 7px;
  gap: 4px;
  svg { flex: none; }
`;
const Rule = styled.span`
  flex: 1;
  height: 1px;
  margin-right: -4px;
  background: #a8a8a8;
`;
const FoldTail = () => (
  <svg width="48" height="12" viewBox="0 0 48 12" aria-hidden>
    <path d="M0 6.500h1l6 5h28l6-5h7" fill="none" stroke="#a8a8a8" /><path d="M17 9l5-4 5 4z" fill="#9a9a9a" />
  </svg>
);
const PauseText = styled.span`
  display: flex;
  align-items: center;
  gap: 9px;
  font-size: 10px;
`;
const Palette = styled.div`
  position: relative;
  display: flex;
  justify-content: space-around;
  align-items: center;
  width: 215px;
  height: 54px;
  padding: 0 3px;
  border: 1px solid #b7c9d9;
  background: #fff;
  > button { padding: 0; border: 0; background: none; }
`;
const More = styled.span`
  position: absolute;
  left: 50%;
  bottom: 1px;
  display: flex;
  align-items: center;
  justify-content: center;
  width: 15px;
  height: 8px;
  margin-left: -8px;
  border: 1px solid #b0bccb;
  background: #f2f5f9;
`;
const Drop = styled.span`
  position: absolute;
  right: 2px;
  bottom: 2px;
`;

const OrderIcon = ({ kind }: { kind: string }) => {
  const c = { STP: "#5c6b7c", LMT: "#c02a62", STL: "#23864a", BRK: "#6a48b0" }[kind]!;
  const band = kind === "BRK" ? 17 : 11;
  return (
    <svg width="33" height="33" viewBox="0 0 33 33" aria-hidden>
      <path d="M4 4h28v28H4z" fill="#dfe6ee" stroke="#8b9bb0" />
      <path d="M1.500 7l6-5.500H29v28H1.500z" fill="#eff3f7" stroke="#7d8da3" />
      <path d="M1.500 7h6V1.500z" fill="#fff" stroke="#7d8da3" />
      <path d={`M2 ${band - 1.5}h27M2 ${band + 11.5}h27`} stroke={c} />
      <path d={`M2 ${band}h27v10H2z`} fill={c} />
      {kind === "STL" && <path d="M2 7.500h27M2 25h27" stroke={c} />}
      {kind === "BRK" && <path d="M2 10h27" stroke={c} />}
      <path
        d={{
          STP: "M24 9V3M22 5l2-2 2 2M7 23v6M5 27l2 2 2-2",
          LMT: "M24 2v6M22 6l2 2 2-2M7 30v-6M5 26l2-2 2 2",
          STL: "M24 1v5M22 4l2 2 2-2M24 30v-4M22 28l2-2 2 2",
          BRK: "M15 8V2M13 4l2-2 2 2M15 11v5M13 14l2 2 2-2",
        }[kind]}
        stroke={c} fill="none" strokeWidth="1.500"
      />
      {kind === "STL" && <path d="M26 12v8M24 14l2-2 2 2M24 18l2 2 2-2" stroke="#fff" fill="none" strokeWidth="1.200" />}
      <text x={kind === "STL" ? 13 : 15} y={band + 8} textAnchor="middle" fontSize="9" fontWeight="600" fill="#fff" fontFamily={UI}>{kind}</text>
    </svg>
  );
};
const Minus = ({ x, y, r = 4 }: { x: number; y: number; r?: number }) => (
  <>
    <circle cx={x} cy={y} r={r} fill="#cc4128" stroke="#8e2412" strokeWidth=".8" />
    <path d={`M${x - r / 2} ${y}h${r}`} stroke="#fff" strokeWidth="1.300" />
  </>
);
const ExitIcon = ({ kind }: { kind: number }) => (
  <svg width="33" height="34" viewBox="0 0 33 34" aria-hidden>
    <path d="M1.500 1.500h27v28h-27z" fill="#dfe8f2" stroke="#8fa5c0" />
    <path d="M4 4h28v23l-6 6H4z" fill="#f7fafd" stroke="#7d93b0" />
    <path d="M8 7v22M12 7v22M16 7v22M20 7v22M24 7v22M28 7v19M6 9h24M6 13h24M6 17h24M6 21h24M6 25h24" stroke="#c7d7e6" strokeWidth=".8" />
    <path d="M32 27h-6v6z" fill="#fff" stroke="#7d93b0" />
    {kind === 0 && <>
      <path d="M7 8h12M10 18v-7M8 13l2-3 2 3" stroke="#2b8a4c" fill="none" strokeWidth="1.500" />
      <path d="M14 26h13M25 15v8M23 20l2 3 2-3" stroke="#b8361f" fill="none" strokeWidth="1.500" />
      <circle cx="25" cy="9" r="4" fill="#eef3f9" stroke="#7186a5" strokeWidth="1.300" /><path d="M25 4v10M20 9h10" stroke="#7186a5" />
      <Minus x={11} y={25} r={4} />
    </>}
    {kind === 1 && <>
      <path d="M9 25c0-12 3-16 8-16M9 8h16M7 17l2-4 3 4" stroke="#2b8a4c" fill="none" strokeWidth="1.500" />
      <path d="M17 9c5 0 8 4 9 10M23 16l3 3 2-4M15 20h13" stroke="#b8361f" fill="none" strokeWidth="1.500" />
      <Minus x={17} y={25} />
    </>}
    {kind === 2 && <>
      <path d="M9 13l6-5M11 8h4v4M7 24l5-6M9 18h3v4" stroke="#2b8a4c" fill="none" strokeWidth="1.500" />
      <path d="M18 7h10M19 8c4 1 5 3 6 6M14 18c3 0 4 2 5 5M10 26h13M23 11l2 3 3-3M17 20l2 3 2-3" stroke="#b8361f" fill="none" strokeWidth="1.500" />
      <Minus x={25} y={17} r={3.5} /><Minus x={25} y={25} r={3.5} />
    </>}
    {kind === 3 && <>
      <path d="M20 10c-5 2-8 6-9 13M8 19l3 4 3-3M8 26h17" stroke="#b8361f" fill="none" strokeWidth="1.500" />
      <Minus x={24} y={9} r={4.5} />
    </>}
  </svg>
);
const MoreTab = () => <More><svg width="5" height="3"><path d="M0 0h5L2.500 3z" fill="#4f66a8" /></svg></More>;
const DropMark = () => <Drop><svg width="10" height="9" viewBox="0 0 10 9" aria-hidden><path d="M2 5H1V1h8v4H8M5 2v5M3 5l2 3 2-3" fill="none" stroke="#4d6426" /></svg></Drop>;
const Orders = ({ drop }: { drop?: boolean }) => (
  <Palette>
    {["STP", "LMT", "STL", "BRK"].map((k) => <button key={k} aria-label={`${k} order`}><OrderIcon kind={k} /></button>)}
    <MoreTab />{drop && <DropMark />}
  </Palette>
);
const Tick = styled.span`
  position: absolute;
  left: 7px;
  top: 2px;
`;
const Exits = ({ drop, active }: { drop?: boolean; active?: boolean }) => (
  <Palette>
    {[0, 1, 2, 3].map((k) => <button key={k} aria-label={`Exit strategy ${k + 1}`}><ExitIcon kind={k} /></button>)}
    {active && <Tick><svg width="15" height="15" viewBox="0 0 15 15" aria-hidden><circle cx="7.500" cy="7.500" r="6.800" fill="#6fb52c" stroke="#4c8a18" /><path d="M4 7.500l3 3 5-5.500" fill="none" stroke="#fff" strokeWidth="2" /></svg></Tick>}
    <MoreTab />{drop && <DropMark />}
  </Palette>
);
const Indent = styled.div`
  padding-left: 63px;
`;

const DataWindow = styled.section`
  margin-top: auto;
  border-top: 1px solid #b8b8b8;
  padding-top: 2px;
`;
const DataBody = styled.div`
  display: flex;
  gap: 1px;
  margin-top: 1px;
`;
const DataTable = styled.table`
  flex: 1;
  background: #000;
  color: #ededed;
  font: 11px/12px ${ARIAL};
  th, td { height: 14px; padding: 0 4px; border: 1px solid #3c3c3c; font-weight: 400; text-align: left; }
  td { text-align: right; }
  th[scope="row"] { width: 63px; }
  th[colspan] { background: #3d3d3d; }
  tr:last-child td { color: #7d7d7d; }
`;
const VScroll = styled.div`
  display: flex;
  flex-direction: column;
  align-items: center;
  justify-content: space-between;
  width: 16px;
  padding: 6px 0;
  background: #f2f2f2;
  span { display: flex; flex-direction: column; gap: 1px; align-items: center; justify-content: center; width: 14px; height: 20px; margin: 8px 0 auto; border: 1px solid #9a9a9a; border-radius: 2px; background: linear-gradient(90deg, #f8f8f8, #d8d8d8); }
  i { width: 7px; height: 2px; background: #777; border-bottom: 1px solid #fff; }
`;

/* ---------- chart ---------- */

const Center = styled.div`
  display: flex;
  flex-direction: column;
  min-width: 0;
  min-height: 0;
`;
const ChartRow = styled.div`
  display: grid;
  grid-template-columns: minmax(0, 1fr) 227px;
  flex: 1;
  min-height: 0;
`;
const ChartCol = styled.section`
  display: flex;
  flex-direction: column;
  min-height: 0;
  background: #000;
`;
const Pane = styled.div<{ $grow?: boolean }>`
  position: relative;
  flex: ${(p) => (p.$grow ? "1 1 0" : "0 0 200px")};
  min-height: 0;
  overflow: hidden;
  background: #000;
  svg.plot { width: 100%; height: 100%; shape-rendering: crispEdges; }
`;
const Divider = styled.div`
  flex: none;
  height: 4px;
  background: linear-gradient(#fff 0 2px, #222 2px 3px, #9a9a9a 3px);
`;
const Status = styled.div`
  position: absolute;
  left: 4px;
  top: 4px;
  display: flex;
  align-items: center;
  gap: 4px;
  white-space: nowrap;
  font: 11px/14px ${ARIAL};
  color: #fff;
`;
const Dim = styled.span`
  margin-left: 1px;
  color: #9b9b9b;
`;
const Lime = styled.span`
  color: #3fd03f;
`;
const Blue = styled.span`
  margin-left: 3px;
  color: #0000c4;
`;
const Chip = styled.button<{ $fill?: boolean }>`
  display: flex;
  align-items: center;
  flex: none;
  gap: ${(p) => (p.$fill ? 5 : 2)}px;
  height: 14px;
  padding: 0 2px;
  border: 1px solid #fff;
  border-radius: 2px;
  background: ${(p) => (p.$fill ? "#8a8a8a" : "#000")};
  color: #fff;
`;
const ChipCaret = styled(Caret)`
  border-width: 4px 3px 0;
  border-top-color: #fff;
`;

const PlotGrid = ({ top, bottom, ys }: { top: number; bottom: number; ys: number[] }) => (
  <>
    {ys.map((y) => <path key={y} d={`M343 ${y + 0.5}H${AXIS_X}`} stroke="#4a4a4a" strokeDasharray="1 3" />)}
    {GRID_X.map((x) => <path key={x} d={`M${x + 0.5} ${top}V${bottom}`} stroke="#484848" strokeDasharray="1 3" />)}
    {SESSION_X.map((x) => <path key={x} d={`M${x + 0.5} ${top}V${bottom}`} stroke="#3c3c3c" strokeDasharray="9 4 3 8" />)}
  </>
);

const PricePlot = () => (
  <svg className="plot" role="img" aria-label="NQ #G 15 minute candles">
    <g transform="translate(-343 -73)">
      <PlotGrid top={73} bottom={897} ys={PRICES.map((p) => p.y)} />
      {CANDLES.map(({ x, bar: [c, h, t, b, l] }) => {
        const y = (v: number) => Math.round(120 + v / 3);
        const bodyH = Math.max(1, y(b) - y(t));
        return (
          <g key={x}>
            <rect x={x} y={y(h)} width="1" height={Math.max(1, y(l) - y(h))} fill={WICK[c]} />
            <rect x={x - 1} y={y(t)} width="3" height={bodyH} fill={INK[c]} />
            {c !== "r" && bodyH > 2 && <rect x={x} y={y(t) + 1} width="1" height={bodyH - 2} fill="#000" />}
          </g>
        );
      })}
      <path d={`M${AXIS_X + 0.5} 73V897`} stroke="#c01c1c" />
      {PRICES.map((p) => (
        <g key={p.y}>
          <path d={`M${AXIS_X} ${p.y + 0.5}h4M${AXIS_X} ${p.y + 15.5}h2`} stroke="#c01c1c" />
          <text x="1634" y={p.y + 4} fontSize="11" fill="#eee" fontFamily={ARIAL}>{p.label}</text>
        </g>
      ))}
    </g>
  </svg>
);

const VolumePlot = () => (
  <svg className="plot" role="img" aria-label="Volume">
    <g transform="translate(-343 -901)">
      <PlotGrid top={901} bottom={1084} ys={VOLS.map((p) => p.y)} />
      {VOLUME.map((h, i) => (
        <rect key={i} x={VOLUME_X + i * 4} y={1077 - Math.round(h / 3)} width="2" height={Math.round(h / 3)} fill="#080878" />
      ))}
      <path d="M343 1077.500H1628" stroke="#161650" strokeDasharray="2 2" />
      <path d={`M${AXIS_X + 0.5} 901V1084M343 1084.500H1694`} stroke="#c01c1c" />
      {GRID_X.concat(SESSION_X).map((x) => <path key={x} d={`M${x + 0.5} 1085v3`} stroke="#c01c1c" />)}
      {TIMES.map(([x, t]) => <text key={x} x={x + 2} y="1098" fontSize="11" fill="#eee" fontFamily={ARIAL}>{t}</text>)}
      {VOLS.map((p) => (
        <g key={p.y}>
          <path d={`M${AXIS_X} ${p.y + 0.5}h4M${AXIS_X} ${p.y - 14.5}h2`} stroke="#c01c1c" />
          <text x="1634" y={p.y + 4} fontSize="11" fill="#eee" fontFamily={ARIAL}>{p.label}</text>
        </g>
      ))}
      <path d="M1631 1050.500l6-6.500h57v13h-57z" fill="#0000ff" />
      <text x="1637" y="1055" fontSize="11" fill="#00006a" fontFamily={ARIAL}>4.597,00</text>
    </g>
  </svg>
);

const HScroll = styled.div`
  display: flex;
  align-items: center;
  flex: none;
  height: 17px;
  padding: 0 6px;
  border-bottom: 1px solid #8a8a8a;
  background: #eeeeee;
  span { display: flex; gap: 1px; align-items: center; justify-content: center; width: 26px; height: 14px; margin: 0 92px 0 auto; border: 1px solid #8e8e8e; border-radius: 2px; background: linear-gradient(#fafafa, #d4d4d4); }
  i { width: 2px; height: 7px; background: #666; border-right: 1px solid #fff; }
`;
const TabStrip = styled.div`
  display: flex;
  align-items: stretch;
  flex: none;
  height: 19px;
  background: linear-gradient(90deg, #9f9f9f 6%, #c4c4c4 45%, #f0f0f0);
`;
const TabNav = styled.div`
  display: flex;
  align-items: center;
  gap: 10px;
  padding: 0 5px 0 5px;
  background: #eee;
  button { width: 9px; padding: 0; border: 0; background: none; }
`;
const SheetTab = styled.button`
  width: 71px;
  padding: 0;
  border: 0;
  background: linear-gradient(#fff, #f0f0f0);
  clip-path: polygon(0 0, 100% 0, 88% 100%, 12% 100%);
  font-weight: 700;
  font-size: 11px;
`;

/* ---------- right panel ---------- */

const Side = styled.aside`
  padding: 8px 5px 0 6px;
  border-left: 1px solid #7a7a7a;
  border-top: 1px solid #8a8a8a;
  background: #f0f0f0;
`;
const SideHead = styled.div`
  display: flex;
  align-items: center;
  gap: 6px;
  height: 24px;
  margin: 0 6px 7px 15px;
`;
const SelectSlot = styled.div`
  display: flex;
  width: 119px;
  margin-left: 9px;
`;
const SideGrid = styled.div`
  display: grid;
  grid-template-columns: 67px 1fr 67px;
  gap: 5px;
  margin-bottom: 9px;
`;
const Tall = styled.div`
  grid-row: span 4;
`;
const SideLabel = styled.p`
  padding-left: 2px;
  margin: 7px 0 9px;
`;

/* ---------- windows ---------- */

const Window = styled.section<{ $x: number; $y: number; $w: number }>`
  position: absolute;
  left: ${(p) => p.$x}px;
  top: ${(p) => p.$y}px;
  width: ${(p) => p.$w}px;
  padding: 0 5px 5px;
  border: 1px solid #8d9092;
  border-radius: 5px;
  background: linear-gradient(90deg, #2c2d2f, #050608 40%, #050608 65%, #2c2e31);
`;
const WinTitle = styled.header`
  display: flex;
  align-items: flex-start;
  height: 27px;
  h2 {
    padding: 0 2px;
    margin: 7px 0 0;
    border-radius: 6px;
    font-size: 11px;
    line-height: 12px;
    color: #000;
    background: #6c6c6c;
    box-shadow: 0 0 6px 4px #6c6c6c;
  }
`;
const WinCaps = styled.div`
  display: flex;
  margin-left: auto;
  border: 1px solid #8a8d90;
  border-top: 0;
  border-radius: 0 0 4px 4px;
  overflow: hidden;
  button { display: flex; align-items: center; justify-content: center; width: 28px; height: 18px; padding: 0 0 2px; border: 0; color: #fff; background: linear-gradient(#3c3e42, #26282b); font: 700 14px/14px ${UI}; }
  button:last-child { width: 47px; border-left: 1px solid #77797c; }
  button:only-child { border: 0; }
`;
const Client = styled.div`
  border: 1px solid #9a9c9e;
  background: #f0f0f0;
  font-family: ${ARIAL};
`;

const FormatBody = styled(Client)`
  padding: 7px 8px 9px 6px;
`;
const Tabs = styled.div<{ $indent?: number }>`
  display: flex;
  align-items: flex-end;
  height: 20px;
  padding-left: ${(p) => p.$indent ?? 0}px;
`;
const Tab = styled.button<{ $on?: boolean; $w: number }>`
  width: ${(p) => p.$w}px;
  height: 18px;
  padding: 0 4px;
  border: 1px solid #8c8e94;
  border-bottom: 0;
  margin-left: -1px;
  background: linear-gradient(#f4f4f4, #e9e9e9 50%, #d8d8d8);
  white-space: nowrap;
  &:first-child { margin-left: 0; }
  ${(p) => p.$on && "height: 21px; margin-bottom: -1px; padding-bottom: 3px; background: #fff; z-index: 1;"}
`;
const Scroller = styled.button`
  width: 16px;
  height: 17px;
  padding: 0 5px;
  margin-bottom: 2px;
  border: 1px solid #a5a8ad;
  background: linear-gradient(#f8f8f8, #dde0e8);
`;
const MainPage = styled.div`
  height: 440px;
  padding: 12px 14px 16px 14px;
  border: 1px solid #8c8e94;
  background: #fff;
`;
const Check = styled.label`
  display: flex;
  align-items: center;
  gap: 4px;
  height: 14px;
  input {
    position: relative;
    width: 13px;
    height: 13px;
    margin: 0;
    appearance: none;
    border: 1px solid #8e8f8f;
    background: linear-gradient(135deg, #d3d8dd, #fff 80%);
    box-shadow: inset 0 0 0 1px #f4f4f4;
  }
  input:checked::after {
    content: "";
    position: absolute;
    left: 3px;
    top: 0;
    width: 5px;
    height: 9px;
    border: solid #3c5a98;
    border-width: 0 2px 2px 0;
    transform: rotate(40deg);
  }
`;
const Form = styled.div`
  display: grid;
  grid-template-columns: 88px 120px 45px 87px;
  align-items: center;
  row-gap: 9px;
  padding: 11px 0 0 15px;
  margin-bottom: 28px;
`;
const ForLabel = styled.label`
  margin-left: 14px;
`;
const LinkLabel = styled.label`
  display: flex;
  align-items: center;
  gap: 2px;
  text-decoration: underline;
`;
const AddGroup = styled.div`
  display: flex;
  gap: 2px;
  grid-column: 4;
  padding-left: 1px;
`;
const ListPage = styled.div`
  height: 286px;
  padding: 12px 12px;
  border: 1px solid #8c8e94;
`;
const ListView = styled.div`
  height: 260px;
  padding: 1px;
  border: 1px solid #828790;
`;
const ListTable = styled.table`
  width: 100%;
  th { height: 24px; padding: 0 0 0 6px; text-align: left; font-weight: 400; border-right: 1px solid #dfe3ea; border-bottom: 1px solid #d5d9e0; background: linear-gradient(#fff, #f5f7f9); }
  th:last-child { border-right: 0; }
`;
const Actions = styled.div<{ $pad: string }>`
  display: flex;
  justify-content: flex-end;
  gap: 8px;
  padding: ${(p) => p.$pad};
`;
const Message = styled.div`
  display: flex;
  gap: 8px;
  height: 98px;
  padding: 26px 25px 0;
  background: #fff;
  font: 11px/15px ${UI};
  svg { flex: none; margin-top: 4px; }
`;

/* ---------- bottom ---------- */

const SymbolBox = styled.label`
  display: flex;
  align-items: center;
  width: 148px;
  height: 20px;
  margin: 0 3px 0 2px;
  padding: 0 3px 0 6px;
  background: #fff;
  input { flex: 1; min-width: 0; padding: 0; border: 0; outline: 0; font-size: 11px; &::placeholder { color: #111; opacity: 1; } }
`;
const DateBox = styled(SymbolBox)`
  width: 143px;
  margin: 0 2px 0 1px;
  gap: 3px;
`;
const JumpButton = styled.button`
  display: flex;
  align-items: center;
  gap: 3px;
  height: 22px;
  padding: 0 7px 0 2px;
  border: 0;
  background: none;
  font-size: 11px;
  &:disabled { color: #9aa0ac; }
`;
const Slider = styled.input`
  width: 88px;
  height: 20px;
  margin: 0 5px 0 8px;
  appearance: none;
  background: linear-gradient(#a9adb5, #a9adb5) center / 100% 1px no-repeat, linear-gradient(#fff, #fff) center / 100% 4px no-repeat;
  &::-webkit-slider-thumb { appearance: none; width: 7px; height: 14px; border: 1px solid #777; border-radius: 2px; background: linear-gradient(#fff, #ddd); }
`;
const StatusBar = styled.footer`
  display: flex;
  align-items: center;
  flex: none;
  height: 22px;
  padding-left: 3px;
  background: #f1edec;
  > span { flex: 1; }
`;
const StatusCell = styled.div<{ $w: number }>`
  display: flex;
  align-items: center;
  justify-content: center;
  width: ${(p) => p.$w}px;
  height: 100%;
  border-left: 1px solid #dcd8d6;
`;
const Led = styled.i`
  width: 16px;
  height: 16px;
  border: 1px solid #23682a;
  border-radius: 4px;
  background: linear-gradient(#8fdc8f, #2f9e38 50%, #1f8a2c);
`;
const Gap = styled.span<{ $w: number }>`
  flex: none;
  width: ${(p) => p.$w}px;
`;

const SearchIcon = () => (
  <svg width="11" height="12" viewBox="0 0 11 12" aria-hidden><circle cx="4.500" cy="4.500" r="3.500" fill="none" stroke="#222" strokeWidth="1.300" /><path d="M7 7l4 4" stroke="#222" strokeWidth="2" /></svg>
);

export default function App() {
  return (
    <Shell>
      <Global />
      <TitleBar>
        <Logo />
        <h1>MultiCharts .NET - Default - [NQ #G - 15 Minutes - Interactive Brokers]</h1>
        <CapGroup>
          <button aria-label="Minimize"><svg width="12" height="4"><path d="M0 0h12v4H0z" fill="#fff" stroke="#445" strokeWidth=".6" /></svg></button>
          <button aria-label="Restore"><svg width="11" height="11" viewBox="0 0 11 11"><path d="M3 1h7v7M1 3h7v7H1zM3 5.500h3v2.500H3z" fill="none" stroke="#fff" strokeWidth="1.500" /></svg></button>
          <button aria-label="Close"><CloseX c="#fff" s={11} /></button>
        </CapGroup>
      </TitleBar>
      <MenuBar>
        <Grip />
        <Glyph name="chart" />
        {["File", "View", "Insert", "Format", "Window", "Help"].map((m) => <MenuItem key={m}>{m}</MenuItem>)}
        <MdiButtons>
          <button aria-label="Detach"><svg width="14" height="10" viewBox="0 0 14 10"><path d="M8 2H1v7h9V6M7 5l5-4M9 .7h3.500v3" fill="none" stroke="#5d6b80" strokeWidth="1.200" /></svg></button>
          <button aria-label="Minimize chart"><svg width="6" height="8"><path d="M0 6h6v2H0z" fill="#5d7ba0" /></svg></button>
          <button aria-label="Restore chart"><svg width="9" height="9" viewBox="0 0 9 9"><path d="M3 3V1h5v4H6M1 3.500h5V8H1z" fill="none" stroke="#5d7ba0" strokeWidth="1.300" /></svg></button>
          <button aria-label="Close chart"><CloseX c="#5d7ba0" s={9} /></button>
        </MdiButtons>
      </MenuBar>
      <Bar $h={27}>
        <Group><Grip /><Tools items="fresh folder v save shut | pageBars pageGrid pageScan pageFx pageMoney pageTable" /></Group>
        <Group>
          <Grip />
          <Tools items="addBars addWave addSignal addDraw v | gearBars | gearWin | ohlc *candles line | tickA tickB tickC pnf multi | arrow *cross | note *level textMark | *panel *chartWin glasses" />
        </Group>
        <Group>
          <Grip />
          <Tools items="squeezeX stretchX squeezeY stretchY up down left right padWide padThin zoomIn zoomOut undo undoX undoY eye hand" />
        </Group>
      </Bar>

      <Workspace>
        <Dock>
          <DockTitle><h2>DOM</h2><button aria-label="Close DOM"><CloseX /></button></DockTitle>
          <Ladder>
            <ConnRow>
              <ConnButton />
              <Field $w={78}><input aria-label="Symbol" defaultValue="YM   SEP 12" /><SearchIcon /></Field>
              <Select label="Account" value="DU20650" />
            </ConnRow>
            <DomTable>
              <thead><tr><th>Buy</th><th>Price</th><th>Sell</th></tr></thead>
              <tbody>
                {Array.from({ length: 28 }, (_, i) => {
                  const buy = BUYS[i - 10];
                  const sell = SELLS[i];
                  return (
                    <tr key={i}>
                      <BuyCell $has={buy !== undefined} $hot={i === 10}>{buy}</BuyCell>
                      <PriceCell $hot={i === 10}>{i === 10 ? "(2)" : ""}13.{311 - i}</PriceCell>
                      <SellCell $has={sell !== undefined} $hot={i === 9}>{sell}</SellCell>
                    </tr>
                  );
                })}
              </tbody>
            </DomTable>
            <Split><svg width="6" height="6" viewBox="0 0 6 6" aria-hidden><path d="M0 2.500L3 0l3 2.500zM0 3.500L3 6l3-2.500z" fill="#999" /></svg></Split>
          </Ladder>
          <TradeWrap>
            <Ear><button aria-label="Close left"><CloseX c="#a3a3a3" s={14} /></button></Ear>
            <Trade>
              <Button $tone="buy" $h={44}>Buy Mkt<b>4</b></Button>
              <Pos $h={44}><span>FLAT</span><span>PnL</span></Pos>
              <Button $tone="sell" $h={44}>Sell Mkt<b>4</b></Button>
              <Button disabled>Cancel All</Button>
              <Button disabled>Close</Button>
              <Button disabled>Reverse</Button>
            </Trade>
            <Ear $right><button aria-label="Close right"><CloseX c="#a3a3a3" s={14} /></button></Ear>
          </TradeWrap>
          <DomRow $gap={5}>
            <QtyField id="dom-qty" value="4" w={79} h={22} />
            <Select label="Time in force" value="DAY" $w={51} />
            <Select label="Order date" value="21.08.2012" $plain disabled />
          </DomRow>
          <Fold>Place Order<Rule /><FoldTail /></Fold>
          <Indent><Orders /></Indent>
          <Fold>Exit Strategy
            <Button $w={99} $h={16}><PauseText><svg width="8" height="8"><path d="M0 0h3v8H0zM5 0h3v8H5z" fill="#666" /></svg><span>Pause</span><span>(1)</span></PauseText></Button>
            <Rule /><FoldTail />
          </Fold>
          <Indent><Exits active /></Indent>

          <DataWindow>
            <DockTitle><h2>Data Window</h2><button aria-label="Close Data Window"><CloseX /></button></DockTitle>
            <DataBody>
              <DataTable>
                <tbody>
                  <tr><th colSpan={2}>Cursor:</th></tr>
                  <tr><th scope="row">Date</th><td>03.08.2012</td></tr>
                  <tr><th scope="row">Time</th><td>03:00:00</td></tr>
                  <tr><th scope="row">Price</th><td>2.606,18</td></tr>
                  <tr><th colSpan={2}>NQ #G:</th></tr>
                  <tr><th scope="row">O</th><td>2.630,00</td></tr>
                </tbody>
              </DataTable>
              <VScroll>
                <svg width="7" height="4"><path d="M0 4h7L3.500 0z" fill="#333" /></svg>
                <span><i /><i /><i /></span>
                <svg width="7" height="4"><path d="M0 0h7L3.500 4z" fill="#333" /></svg>
              </VScroll>
            </DataBody>
          </DataWindow>
        </Dock>

        <Center>
          <ChartRow>
            <ChartCol>
              <Pane $grow>
                <PricePlot />
                <Status>
                  <Chip $fill>SA<ChipCaret /></Chip>
                  <Dim>NQ #G</Dim>
                  <Chip>I<ChipCaret /></Chip>
                  <Dim>[!NQ_11VOC^HMUZ] E-mini Nasdaq 100</Dim>
                  <Dim>15 Minutes</Dim>
                  <Chip>R<ChipCaret /></Chip>
                  <Dim>Trade</Dim><Dim>GLOBEX</Dim><Dim>Interactive Brokers</Dim><Dim>Custom Futures</Dim>
                  <span>21.08.2012</span><span>09:38:09</span><span>B=2.801,25</span><span>A=2.801,50</span>
                  <Lime>O=2.780,75</Lime><span>H=2.802,25</span><span>L=2.779,75</span>
                  <Lime>C=2.801,25</Lime><Lime>Last=2.801,25</Lime><Lime>+21,25</Lime><Lime>+0,76%</Lime><span>V=</span>
                </Status>
              </Pane>
              <Divider />
              <Pane>
                <VolumePlot />
                <Status>
                  <Chip aria-label="Close volume"><CloseX c="#fff" s={9} /></Chip>
                  <span>Volume</span><Blue>3.839,00</Blue>
                </Status>
              </Pane>
              <HScroll>
                <svg width="4" height="7"><path d="M4 0v7L0 3.500z" fill="#222" /></svg>
                <span><i /><i /><i /></span>
                <svg width="4" height="7"><path d="M0 0v7l4-3.500z" fill="#222" /></svg>
              </HScroll>
            </ChartCol>
            <Side>
              <SideHead>
                <ConnButton />
                <SelectSlot><Select label="Account" value="DU20650" $h={24} /></SelectSlot>
                <svg width="17" height="12" viewBox="0 0 17 12" aria-hidden><path d="M1 4.500h3V2l4 4-4 4V7.500H1z" fill="#fff" stroke="#222" /><path d="M10.500.500h6v11h-6z" fill="#fff" stroke="#222" /><path d="M12 3h3M12 5h3M12 7h3M12 9h3" stroke="#222" /></svg>
              </SideHead>
              <SideGrid>
                <Button $tone="buy" $h={26}>Buy Mkt</Button>
                <Tall><Pos $h={50}><span>Flat</span><span>PnL</span></Pos></Tall>
                <Button $tone="sell" $h={26}>Sell Mkt</Button>
                <Button $tone="buy" $h={35}>Buy Ask</Button>
                <Button $tone="sell" $h={35}>Sell Bid</Button>
                <Button $tone="buy" $h={36}>Buy Bid</Button>
                <Button $tone="sell" $h={36}>Sell Ask</Button>
                <Button disabled $h={26}>Cancel Bids</Button>
                <Button disabled $h={26}>Cancel Asks</Button>
                <Button disabled $h={26}>Cancel All</Button>
                <Button disabled $h={26}>Close</Button>
                <Button disabled $h={26}>Reverse</Button>
              </SideGrid>
              <OrderRow $gap={4}>
                <QtyField id="side-qty" value="1" w={79} h={23} />
                <Select label="Time in force" value="DAY" $w={45} $h={23} />
                <Select label="Order date" value="21.08.2012" $plain disabled $h={23} />
              </OrderRow>
              <SideLabel>Place Order:</SideLabel>
              <Orders drop />
              <SideLabel>Exit Strategy:</SideLabel>
              <Exits drop />
            </Side>
          </ChartRow>
          <TabStrip>
            <TabNav>
              <button aria-label="First sheet"><svg width="9" height="9"><path d="M1 0v9M8 0v9L3 4.500z" stroke="#777" fill="#777" /></svg></button>
              <button aria-label="Previous sheet"><svg width="9" height="9"><path d="M6 0v9L1 4.500z" fill="#777" /></svg></button>
              <button aria-label="Next sheet"><svg width="9" height="9"><path d="M2 0v9l5-4.500z" fill="#777" /></svg></button>
              <button aria-label="Last sheet"><svg width="9" height="9"><path d="M8 0v9M1 0v9l5-4.500z" stroke="#777" fill="#777" /></svg></button>
            </TabNav>
            <SheetTab>Default</SheetTab>
          </TabStrip>
        </Center>
      </Workspace>

      <Bar $h={35}>
        <Group>
          <Grip />
          <SymbolBox><input aria-label="Symbol or interval" placeholder="Type a symbol/interval" /><Caret /></SymbolBox>
          <Tool $on aria-label="Clock"><svg width="17" height="17" viewBox="0 0 17 17"><circle cx="8.500" cy="8.500" r="7" fill="#cfe9f7" stroke="#2c87b8" strokeWidth="1.800" /><path d="M8.500 9l4-4M8.500 9L6 7" stroke="#1c5f88" strokeWidth="1.300" /><circle cx="10" cy="11" r="2" fill="#f0c860" /></svg></Tool>
        </Group>
        <Group>
          <Grip />
          <Tools items="tick v vol v rng v watchS v watchM v clockH calD calW calM calQ calY" />
        </Group>
        <Grip />
        <Select label="Resolution" value="As is (15 Minutes)" $w={130} $h={24} />
        <Sep />
        <DateBox><input aria-label="Jump date" /><svg width="11" height="13" viewBox="0 0 11 13"><path d="M.5.500h10v12H.5z" fill="#eee" stroke="#777" /><path d="M2 4h7M2 6h7M2 8h7M2 10h7" stroke="#888" /></svg><Caret $c="#45608a" /></DateBox>
        <Tools items="gridGo" /><Sep />
        <JumpButton><Glyph name="jump" />Jump</JumpButton><Sep />
        <Gap $w={5} />
        <Tools items="backEnd v" /><Gap $w={3} /><Tools items="play" /><Gap $w={5} /><Tools items="playBar v playEnd" />
        <Sep /><Slider type="range" aria-label="Playback speed" min="0" max="100" defaultValue="25" /><Sep />
        <JumpButton disabled><Glyph name="global" />Global Mode</JumpButton>
      </Bar>
      <StatusBar>
        <span>Ready</span>
        <StatusCell $w={83}>0 q / 0 s</StatusCell>
        <StatusCell $w={63}>16:38:12</StatusCell>
        <StatusCell $w={28}><Led /></StatusCell>
        <StatusCell $w={13} />
      </StatusBar>

      <Window $x={384} $y={299} $w={439} role="dialog" aria-label="Format Instrument">
        <WinTitle><h2>Format Instrument</h2><WinCaps><button aria-label="Help">?</button><button aria-label="Close"><CloseX c="#fff" s={11} /></button></WinCaps></WinTitle>
        <FormatBody>
          <Tabs>
            <Tab $on $w={65}>Instrument</Tab><Tab $w={50}>Settings</Tab><Tab $w={43}>Style</Tab><Tab $w={48}>Scaling</Tab><Tab $w={78}>Volume Profile</Tab>
          </Tabs>
          <MainPage>
            <Check><input type="checkbox" defaultChecked />Merge Data Sources into a Single Chart</Check>
            <Form>
              <label>Data Source:</label>
              <Select label="Data Source" value="Interactive Brokers" $w={120} $h={21} $font={ARIAL} />
              <ForLabel>For:</ForLabel>
              <Select label="For" value="History" $w={87} $h={21} $font={ARIAL} />
              <LinkLabel htmlFor="instrument"><Caret $c="#000" />Instrument:</LinkLabel>
              <SelectBox $w={120} $h={21} $plain $font={ARIAL}><input id="instrument" defaultValue="NQ #G" /></SelectBox>
              <AddGroup><Button $w={66}>Add...</Button><Button $w={18} aria-label="Add menu"><Caret $c="#000" /></Button></AddGroup>
            </Form>
            <Tabs $indent={2}>
              <Tab $w={79}>All Instruments</Tab><Tab $on $w={51}>Futures</Tab><Tab $w={44}>Stocks</Tab><Tab $w={49}>Indexes</Tab>
              <Tab $w={43}>Cash</Tab><Tab $w={43}>Forex</Tab><Tab $w={47}>Custom</Tab>
              <Scroller aria-label="Scroll left"><svg width="4" height="6"><path d="M4 0v6L0 3z" fill="#4f66a8" /></svg></Scroller>
              <Scroller aria-label="Scroll right"><svg width="4" height="6"><path d="M0 0v6l4-3z" fill="#4f66a8" /></svg></Scroller>
            </Tabs>
            <ListPage>
              <ListView>
                <ListTable>
                  <colgroup><col width="100" /><col width="150" /><col width="86" /><col /></colgroup>
                  <thead><tr><th>Instrument</th><th>Description</th><th>Exchange</th><th /></tr></thead>
                </ListTable>
              </ListView>
            </ListPage>
          </MainPage>
          <Actions $pad="7px 0 0"><Button $w={73}>OK</Button><Button $w={73}>Abbrechen</Button></Actions>
        </FormatBody>
      </Window>

      <Window $x={890} $y={524} $w={418} role="alertdialog" aria-label="MultiCharts .NET">
        <WinTitle><h2>MultiCharts .NET</h2><WinCaps><button aria-label="Close"><CloseX c="#fff" s={11} /></button></WinCaps></WinTitle>
        <Client>
          <Message>
            <svg width="32" height="28" viewBox="0 0 32 28" aria-hidden>
              <path d="M16 2L30 26H2z" fill="#f6c614" stroke="#b9b08c" strokeWidth="2.500" strokeLinejoin="round" />
              <path d="M16 4L28 25H16z" fill="#f0a512" opacity=".6" />
              <path d="M14 9h4l-1 10h-2zM14.500 21h3v3h-3z" fill="#2a2410" />
            </svg>
            <p>&lt;NQ #G&gt; is not found.<br />Please make sure that the instrument name is correct and<br />that you have added the instrument in QuoteManager.</p>
          </Message>
          <Actions $pad="13px 7px 12px"><Button $w={86} $h={24} $font={UI}>OK</Button></Actions>
        </Client>
      </Window>
    </Shell>
  );
}
